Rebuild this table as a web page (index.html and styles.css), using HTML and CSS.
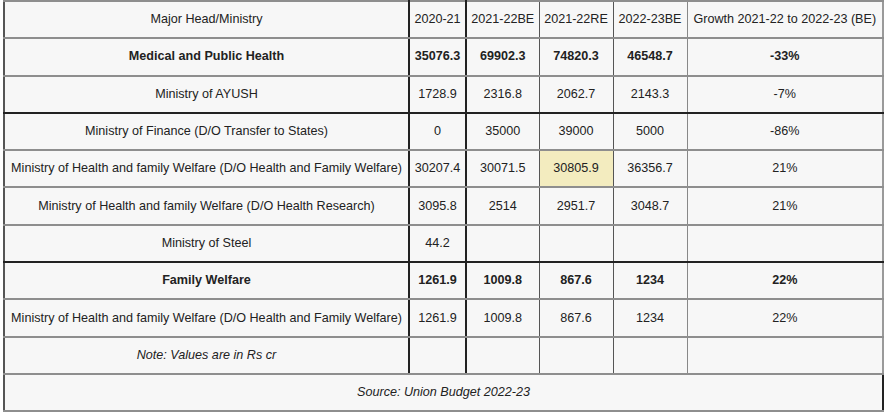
FILE: index.html
```html
<!DOCTYPE html>
<html>
<head>
<meta charset="utf-8">
<link rel="stylesheet" href="styles.css">
</head>
<body>
<table class="budget">
  <colgroup>
    <col class="c-name"><col class="c-y1"><col class="c-y2"><col class="c-y3"><col class="c-y4"><col class="c-growth">
  </colgroup>
  <tr>
    <td>Major Head/Ministry</td><td>2020-21</td><td>2021-22BE</td><td>2021-22RE</td><td>2022-23BE</td><td>Growth 2021-22 to 2022-23 (BE)</td>
  </tr>
  <tr class="bold">
    <td>Medical and Public Health</td><td>35076.3</td><td>69902.3</td><td>74820.3</td><td>46548.7</td><td>-33%</td>
  </tr>
  <tr class="sep">
    <td>Ministry of AYUSH</td><td>1728.9</td><td>2316.8</td><td>2062.7</td><td>2143.3</td><td>-7%</td>
  </tr>
  <tr>
    <td>Ministry of Finance (D/O Transfer to States)</td><td>0</td><td>35000</td><td>39000</td><td>5000</td><td>-86%</td>
  </tr>
  <tr>
    <td>Ministry of Health and family Welfare (D/O Health and Family Welfare)</td><td>30207.4</td><td>30071.5</td><td class="hl">30805.9</td><td>36356.7</td><td>21%</td>
  </tr>
  <tr>
    <td>Ministry of Health and family Welfare (D/O Health Research)</td><td>3095.8</td><td>2514</td><td>2951.7</td><td>3048.7</td><td>21%</td>
  </tr>
  <tr class="sep">
    <td>Ministry of Steel</td><td>44.2</td><td></td><td></td><td></td><td></td>
  </tr>
  <tr class="bold">
    <td>Family Welfare</td><td>1261.9</td><td>1009.8</td><td>867.6</td><td>1234</td><td>22%</td>
  </tr>
  <tr>
    <td>Ministry of Health and family Welfare (D/O Health and Family Welfare)</td><td>1261.9</td><td>1009.8</td><td>867.6</td><td>1234</td><td>22%</td>
  </tr>
  <tr>
    <td class="note">Note: Values are in Rs cr</td><td></td><td></td><td></td><td></td><td></td>
  </tr>
  <tr>
    <td class="note" colspan="6">Source: Union Budget 2022-23</td>
  </tr>
</table>
</body>
</html>
```

FILE: styles.css
```css
html, body {
  margin: 0;
  padding: 0;
  background: #ffffff;
}

body {
  padding: 0 0 0 3px;
}

.budget {
  border-collapse: collapse;
  table-layout: fixed;
  width: 879px;
  background: #f7f7f7;
  font-family: "Liberation Sans", Arial, sans-serif;
  font-size: 12.6px;
  color: #222;
  border-top: 2px solid #9a9a9a;
  border-left: 2px solid #555;
  border-right: 2px solid #9a9a9a;
  border-bottom: 2px solid #333;
}

.c-name { width: 405px; }
.c-y1 { width: 57px; }
.c-y2 { width: 73px; }
.c-y3 { width: 74px; }
.c-y4 { width: 74px; }
.c-growth { width: 196px; }

.budget tr {
  height: 37.3px;
}

.budget td {
  padding: 0 4px 1px;
  text-align: center;
  vertical-align: middle;
  white-space: nowrap;
  border-top: 2px solid #8e8e8e;
  border-bottom: 2px solid #8e8e8e;
  border-left: 1px solid #555;
  border-right: 1px solid #555;
}

.budget td:nth-child(1),
.budget td:nth-child(2) {
  border-right: 2px solid #222;
}

.budget td:nth-child(5) {
  border-right: 1px solid #888;
}

.budget tr.sep td {
  border-bottom: 2px solid #222;
}

.budget tr.bold td {
  font-weight: bold;
}

.budget td.hl {
  background: #f3ecbf;
}

.budget td.note {
  font-style: italic;
}
```
